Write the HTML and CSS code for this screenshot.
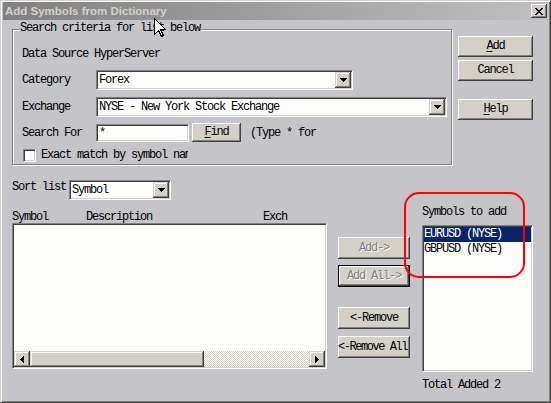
FILE: index.html
```html
<!DOCTYPE html>
<html>
<head>
<meta charset="utf-8">
<title>Add Symbols from Dictionary</title>
<link rel="stylesheet" href="styles.css">
</head>
<body>
<div class="window">
  <div class="titlebar">
    <span class="title">Add Symbols from Dictionary</span>
    <span class="close"><svg width="8" height="7" viewBox="0 0 8 7" shape-rendering="crispEdges"><path fill="#000" d="M0 0h2v1h-2zM6 0h2v1h-2zM1 1h2v1h-2zM5 1h2v1h-2zM2 2h4v1h-4zM3 3h2v1h-2zM2 4h4v1h-4zM1 5h2v1h-2zM5 5h2v1h-2zM0 6h2v1h-2zM6 6h2v1h-2z"/></svg></span>
  </div>
  <div class="content">
    <div class="top">
      <fieldset class="group">
        <legend>Search criteria for list below</legend>
        <div class="ds">Data Source HyperServer</div>
        <div class="row r-cat">
          <span class="lbl">Category</span>
          <div class="combo sunken w-cat"><span class="val">Forex</span><span class="dd"><svg width="7" height="4" viewBox="0 0 7 4" shape-rendering="crispEdges"><path d="M0 0h7v1h-7zM1 1h5v1h-5zM2 2h3v1h-3zM3 3h1v1h-1z"/></svg></span></div>
        </div>
        <div class="row r-next">
          <span class="lbl">Exchange</span>
          <div class="combo sunken w-exch"><span class="val">NYSE - New York Stock Exchange</span><span class="dd"><svg width="7" height="4" viewBox="0 0 7 4" shape-rendering="crispEdges"><path d="M0 0h7v1h-7zM1 1h5v1h-5zM2 2h3v1h-3zM3 3h1v1h-1z"/></svg></span></div>
        </div>
        <div class="row r-next">
          <span class="lbl">Search For</span>
          <div class="input sunken"><span class="val">*</span></div>
          <span class="btn find"><u>F</u>ind</span>
          <span class="hint">(Type * for</span>
        </div>
        <div class="row r-next r-check">
          <span class="checkbox sunken"></span>
          <span class="checktext">Exact match by symbol name</span>
        </div>
      </fieldset>
      <div class="side">
        <span class="btn side-btn"><u>A</u>dd</span>
        <span class="btn side-btn cancel">Cancel</span>
        <span class="btn side-btn help"><u>H</u>elp</span>
      </div>
    </div>
    <div class="bottom">
      <div class="col-left">
        <div class="sortrow">
          <span class="sortlbl">Sort list</span>
          <div class="combo sunken w-sort"><span class="val">Symbol</span><span class="dd"><svg width="7" height="4" viewBox="0 0 7 4" shape-rendering="crispEdges"><path d="M0 0h7v1h-7zM1 1h5v1h-5zM2 2h3v1h-3zM3 3h1v1h-1z"/></svg></span></div>
        </div>
        <div class="heads"><span class="h1">Symbol</span><span class="h2">Description</span><span>Exch</span></div>
        <div class="list sunken">
          <div class="list-body"></div>
          <div class="hscroll">
            <span class="sbtn"><svg width="4" height="7" viewBox="0 0 4 7" shape-rendering="crispEdges"><path d="M0 3h1v1h-1zM1 2h1v3h-1zM2 1h1v5h-1zM3 0h1v7h-1z"/></svg></span>
            <span class="thumb"></span>
            <span class="track"></span>
            <span class="sbtn"><svg width="4" height="7" viewBox="0 0 4 7" shape-rendering="crispEdges"><path d="M0 0h1v7h-1zM1 1h1v5h-1zM2 2h1v3h-1zM3 3h1v1h-1z"/></svg></span>
          </div>
        </div>
      </div>
      <div class="col-mid">
        <span class="btn mid disabled">Add-&gt;</span>
        <span class="btn mid disabled default addall">Add All-&gt;</span>
        <span class="btn mid remove">&lt;-Remove</span>
        <span class="btn mid removeall">&lt;-Remove All</span>
      </div>
      <div class="col-right">
        <div class="rlbl">Symbols to add</div>
        <div class="listbox sunken">
          <div class="item selected">EURUSD (NYSE)</div>
          <div class="item">GBPUSD (NYSE)</div>
        </div>
        <div class="total">Total Added 2</div>
      </div>
    </div>
  </div>
  <div class="highlight"></div>
  <svg class="cursor" width="13" height="20" viewBox="0 0 13 20" shape-rendering="crispEdges"><path d="M0.5 0.5V16.5L4.5 12.5L7.5 18.5L9.5 17.5L6.5 11.5H11.5Z" fill="#fff" stroke="#000" stroke-width="1"/></svg>
</div>
</body>
</html>
```
FILE: styles.css
```css
* { box-sizing: border-box; }
html, body { margin: 0; padding: 0; }
body {
  width: 551px;
  height: 403px;
  overflow: hidden;
  background: #c5c4c8;
  font-family: "Liberation Mono", monospace;
  font-size: 12px;
  letter-spacing: -1.2px;
  color: #000;
}
.window {
  position: relative;
  width: 551px;
  height: 403px;
  background: #c5c4c8;
  border: 1px solid;
  border-color: #d4d0c8 #404040 #404040 #d4d0c8;
  box-shadow: inset 1px 1px #fff, inset -1px -1px #808080;
  padding: 1px 2px 2px 2px;
}
.titlebar {
  height: 18px;
  display: flex;
  align-items: center;
  justify-content: space-between;
  padding: 0 1px 0 2px;
  background: linear-gradient(to right, #808080, #c0c0c0);
}
.title {
  font-family: "Liberation Sans", Arial, sans-serif;
  font-weight: bold;
  font-size: 11.5px;
  letter-spacing: 0;
  color: #d4d0c8;
}
.close {
  width: 16px;
  height: 14px;
  background: #d4d0c8;
  box-shadow: inset -1px -1px #404040, inset 1px 1px #fff, inset -2px -2px #808080;
  display: flex;
  align-items: center;
  justify-content: center;
  padding-top: 1px;
}
.close svg { display: block; }

.content { padding-left: 9px; }
.top {
  display: flex;
  align-items: flex-start;
  margin-top: 2px;
  height: 143px;
}
.group {
  margin: 0;
  width: 440px;
  height: 143px;
  min-inline-size: 0;
  border: 1px solid #808080;
  box-shadow: inset 1px 1px #fff, 1px 1px #fff;
  padding: 11px 0 2px 9px;
}
.group legend {
  padding: 0 1px 2px;
  margin-left: -3px;
  line-height: 13px;
  background: #c5c4c8;
}
.ds { height: 13px; line-height: 13px; }
.row { display: flex; align-items: center; }
.r-cat { margin-top: 9px; }
.r-next { margin-top: 7px; }
.lbl { width: 74px; flex: none; line-height: 13px; }
.sunken {
  border: 1px solid;
  border-color: #808080 #fff #fff #808080;
  box-shadow: inset 1px 1px #404040, inset -1px -1px #d4d0c8;
  background: #fdfefc;
}
.combo {
  display: flex;
  align-items: stretch;
  height: 20px;
  padding: 1px;
}
.combo .val {
  flex: 1;
  padding-left: 1px;
  line-height: 16px;
  white-space: nowrap;
  overflow: hidden;
}
.dd {
  width: 16px;
  flex: none;
  background: #d4d0c8;
  box-shadow: inset -1px -1px #404040, inset 1px 1px #d4d0c8, inset -2px -2px #808080, inset 2px 2px #fff;
  display: flex;
  align-items: center;
  justify-content: center;
}
.dd svg, .sbtn svg { display: block; }
.w-cat { width: 257px; }
.w-exch { width: 351px; }
.w-sort { width: 102px; }
.input {
  width: 93px;
  height: 18px;
  padding: 1px 1px 1px 2px;
  line-height: 14px;
}
.btn {
  display: flex;
  align-items: center;
  justify-content: center;
  background: #d4d0c8;
  box-shadow: inset -1px -1px #404040, inset 1px 1px #fff, inset -2px -2px #808080;
  white-space: nowrap;
  overflow: hidden;
  line-height: 13px;
}
.btn u { text-decoration-thickness: 1px; text-underline-offset: 2px; }
.find {
  width: 49px;
  height: 19px;
  margin-left: 3px;
  align-self: flex-start;
  margin-top: -1px;
}
.hint { margin-left: 9px; line-height: 13px; }
.r-check { height: 13px; }
.checkbox {
  width: 13px;
  height: 13px;
  margin-left: 1px;
  flex: none;
}
.checktext {
  margin-left: 5px;
  width: 147px;
  overflow: hidden;
  white-space: nowrap;
  line-height: 13px;
}

.side {
  margin-left: 6px;
  padding-top: 14px;
  display: flex;
  flex-direction: column;
}
.side-btn { width: 75px; height: 21px; }
.cancel { margin-top: 3px; }
.help { margin-top: 18px; }

.bottom { display: flex; align-items: flex-start; }
.col-left { width: 315px; padding-top: 15px; }
.sortrow { display: flex; align-items: flex-start; height: 20px; }
.sortlbl { width: 57px; flex: none; padding-top: 1px; line-height: 13px; }
.heads { margin-top: 11px; height: 13px; line-height: 13px; display: flex; }
.h1 { width: 74px; }
.h2 { width: 177px; }
.list {
  margin-top: -1px;
  height: 146px;
  padding: 1px;
  display: flex;
  flex-direction: column;
}
.list-body { flex: 1; }
.hscroll { height: 16px; display: flex; }
.sbtn {
  width: 16px;
  flex: none;
  background: #d4d0c8;
  box-shadow: inset -1px -1px #404040, inset 1px 1px #d4d0c8, inset -2px -2px #808080, inset 2px 2px #fff;
  display: flex;
  align-items: center;
  justify-content: center;
}
.thumb {
  width: 174px;
  flex: none;
  background: #d4d0c8;
  box-shadow: inset -1px -1px #404040, inset 1px 1px #d4d0c8, inset -2px -2px #808080, inset 2px 2px #fff;
}
.track {
  flex: 1;
  background: repeating-conic-gradient(#d4d0c8 0 25%, #fff 0 50%) 0 0 / 2px 2px;
}

.col-mid {
  margin-left: 11px;
  width: 72px;
  padding-top: 72px;
  display: flex;
  flex-direction: column;
}
.mid { width: 72px; height: 22px; }
.addall { margin-top: 6px; }
.remove { margin-top: 20px; }
.removeall {
  margin-top: 7px;
  justify-content: flex-start;
  padding-left: 0;
  letter-spacing: -1.45px;
}
.disabled { color: #808080; text-shadow: 1px 1px #fff; }
.default { border: 1px solid #000; }

.col-right {
  margin-left: 12px;
  width: 111px;
  padding-top: 41px;
}
.rlbl { line-height: 13px; height: 13px; }
.listbox {
  margin-top: 6px;
  height: 147px;
  padding: 1px;
}
.item { line-height: 15px; height: 15px; white-space: nowrap; }
.item.selected { background: #0a246a; color: #fff; }
.total { margin-top: 7px; line-height: 13px; }

.highlight {
  position: absolute;
  left: 403px;
  top: 191px;
  width: 121px;
  height: 86px;
  border: 2px solid #ff0000;
  border-radius: 15px;
}
.cursor {
  position: absolute;
  left: 153px;
  top: 17px;
}
```
